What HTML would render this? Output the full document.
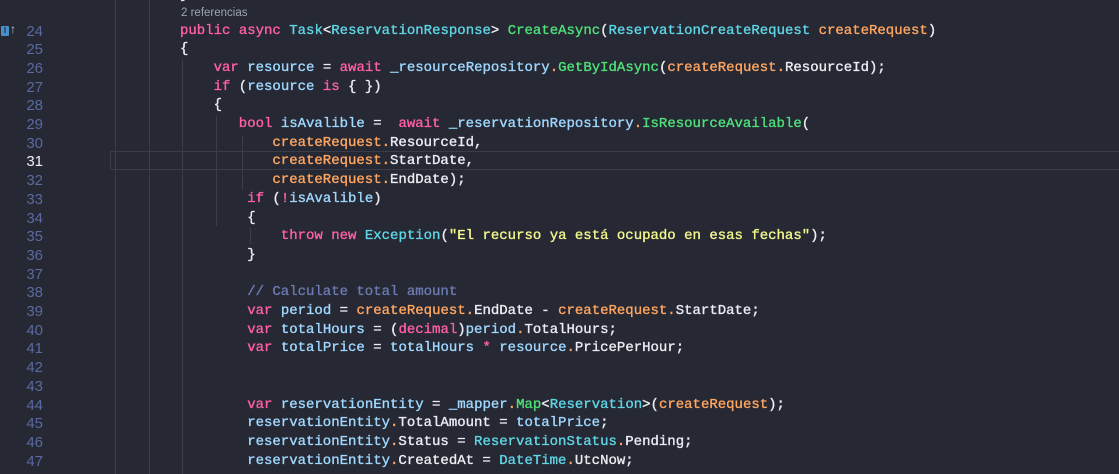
<!DOCTYPE html><html><head><meta charset="utf-8"><style>
body{margin:0;width:1119px;height:474px;background:#262833;overflow:hidden;position:relative;font-family:"Liberation Mono",monospace;font-size:14px}
.l{position:absolute;left:180px;white-space:pre;height:19px;line-height:19px;color:#ececf2;-webkit-text-stroke:0.35px currentColor}
.l span{-webkit-text-stroke:0.35px currentColor}
.n{position:absolute;width:43px;text-align:right;left:0;color:#5a6aa0;font-size:15px;line-height:19px;font-family:"Liberation Sans",sans-serif}
.k{color:#ff5fa8}.t{color:#5fd6e6}.m{color:#4fe07a}.p{color:#ffa660}.v{color:#9fd8ff}.c{color:#6b7ab0}.s{color:#f3f78d}.w{color:#e8e8ee}
.g{position:absolute;width:1px;background:#3b3d48}
</style></head><body>
<div class="g" style="left:115px;top:0;height:474px"></div>
<div class="g" style="left:149px;top:0;height:474px"></div>
<div class="g" style="left:182px;top:60px;height:414px"></div>
<div class="g" style="left:216px;top:116px;height:110px"></div>
<div class="g" style="left:242px;top:135px;height:55px"></div>
<div class="g" style="left:250px;top:228px;height:16px"></div>
<div style="position:absolute;left:110px;top:151px;width:1015px;height:17px;border:1px solid #3a3c48"></div>
<div style="position:absolute;left:181px;top:7px;font:11.5px 'Liberation Sans',sans-serif;color:#a0a4b0">2 referencias</div>
<div style="position:absolute;left:1px;top:26px;width:8px;height:10px;background:#4a90c8;border-radius:1px;color:#1a2a40;font:bold 8px 'Liberation Sans';text-align:center;line-height:10px">I</div>
<div style="position:absolute;left:10px;top:22px;color:#c0c4d0;font:bold 12px 'Liberation Sans',sans-serif">↑</div>
<div class="n" style="top:-14px">23</div><div class="l" style="top:-14px">}</div>
<div id="c"></div>
<script>
var L=[
[24,0,'<span class="k">public</span> <span class="k">async</span> <span class="t">Task</span>&lt;<span class="t">ReservationResponse</span>&gt; <span class="m">CreateAsync</span>(<span class="t">ReservationCreateRequest</span> <span class="p">createRequest</span>)'],
[25,0,'{'],
[26,4,'<span class="k">var</span> <span class="v">resource</span> = <span class="k">await</span> <span class="v">_resourceRepository</span><span class="p">.</span><span class="m">GetByIdAsync</span>(<span class="p">createRequest.</span>ResourceId);'],
[27,4,'<span class="k">if</span> (<span class="v">resource</span> <span class="k">is</span> { })'],
[28,4,'{'],
[29,7,'<span class="k">bool</span> <span class="v">isAvalible</span> =  <span class="k">await</span> <span class="v">_reservationRepository</span><span class="p">.</span><span class="m">IsResourceAvailable</span>('],
[30,11,'<span class="p">createRequest.</span>ResourceId,'],
[31,11,'<span class="p">createRequest.</span>StartDate,'],
[32,11,'<span class="p">createRequest.</span>EndDate);'],
[33,8,'<span class="k">if</span> (<span class="k">!</span><span class="v">isAvalible</span>)'],
[34,8,'{'],
[35,12,'<span class="k">throw</span> <span class="k">new</span> <span class="t">Exception</span>(<span class="s">"El recurso ya está ocupado en esas fechas"</span>);'],
[36,8,'}'],
[37,0,''],
[38,8,'<span class="c">// Calculate total amount</span>'],
[39,8,'<span class="k">var</span> <span class="v">period</span> = <span class="p">createRequest.</span>EndDate - <span class="p">createRequest.</span>StartDate;'],
[40,8,'<span class="k">var</span> <span class="v">totalHours</span> = (<span class="k">decimal</span>)<span class="v">period</span><span class="p">.</span>TotalHours;'],
[41,8,'<span class="k">var</span> <span class="v">totalPrice</span> = <span class="v">totalHours</span> <span class="k">*</span> <span class="v">resource</span><span class="p">.</span>PricePerHour;'],
[42,0,''],[43,0,''],
[44,8,'<span class="k">var</span> <span class="v">reservationEntity</span> = <span class="v">_mapper</span><span class="p">.</span><span class="m">Map</span>&lt;<span class="t">Reservation</span>&gt;(<span class="p">createRequest</span>);'],
[45,8,'<span class="v">reservationEntity</span><span class="p">.</span>TotalAmount = <span class="v">totalPrice</span>;'],
[46,8,'<span class="v">reservationEntity</span><span class="p">.</span>Status = <span class="t">ReservationStatus</span><span class="p">.</span>Pending;'],
[47,8,'<span class="v">reservationEntity</span><span class="p">.</span>CreatedAt = <span class="t">DateTime</span><span class="p">.</span>UtcNow;']];
var h='';L.forEach(function(a){var t=21.5+(a[0]-24)*18.7;h+='<div class="n" style="top:'+t+'px;'+(a[0]==31?'color:#f0f0f0':'')+'">'+a[0]+'</div><div class="l" style="top:'+t+'px;left:'+(180+a[1]*8.4)+'px">'+a[2]+'</div>';});
document.getElementById('c').innerHTML=h;
</script>
</body></html>
